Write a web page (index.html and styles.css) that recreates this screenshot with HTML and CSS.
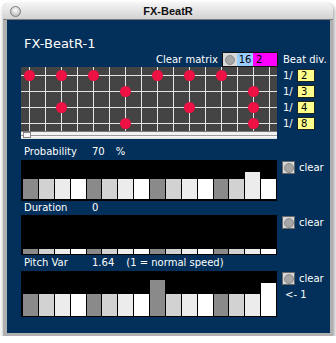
FILE: index.html
```html
<!DOCTYPE html>
<html>
	<head>
		<meta charset="UTF-8">
		<title>FX-BeatR</title>
		<link rel="stylesheet" href="styles.css">
	</head>
	<body>
		<section class="window">
			<div class="titlebar">
				<span class="close"></span>
				<span class="title">FX-BeatR</span>
				<span></span>
			</div>
			<div class="panel">
				<h1 class="name">FX-BeatR-1</h1>

				<div class="matrix-area">
					<div class="matrix-col">
						<div class="clear-row">
							<span>Clear matrix</span>
							<div class="seg">
								<span class="seg-knob"><i></i></span>
								<span class="seg-steps">16</span>
								<span class="seg-rows">2</span>
							</div>
						</div>
						<div class="grid">
							<span class="on"></span><span></span><span class="on"></span><span></span><span class="on"></span><span></span><span></span><span></span><span class="on"></span><span></span><span class="on"></span><span></span><span class="on"></span><span></span><span></span><span></span>
							<span></span><span></span><span></span><span></span><span></span><span></span><span class="on"></span><span></span><span></span><span></span><span></span><span></span><span></span><span></span><span class="on"></span><span></span>
							<span></span><span></span><span class="on"></span><span></span><span></span><span></span><span></span><span></span><span></span><span></span><span class="on"></span><span></span><span></span><span></span><span class="on"></span><span></span>
							<span></span><span></span><span></span><span></span><span></span><span></span><span class="on"></span><span></span><span></span><span></span><span></span><span></span><span></span><span></span><span class="on"></span><span></span>
						</div>
						<div class="slider"><span class="thumb"></span></div>
					</div>
					<div class="beat-col">
						<div class="beat-head">Beat div.</div>
						<div class="beat-row"><span class="frac">1/</span><span class="ybox">2</span></div>
						<div class="beat-row"><span class="frac">1/</span><span class="ybox">3</span></div>
						<div class="beat-row"><span class="frac">1/</span><span class="ybox">4</span></div>
						<div class="beat-row"><span class="frac">1/</span><span class="ybox">8</span></div>
					</div>
				</div>

				<div class="label-row prob-label">
					<span class="lbl">Probability</span><span>70</span><span class="unit">%</span>
				</div>
				<div class="graph-row">
					<div class="graph prob">
						<span class="bar"></span><span class="bar"></span><span class="bar"></span><span class="bar"></span>
						<span class="bar"></span><span class="bar"></span><span class="bar"></span><span class="bar"></span>
						<span class="bar"></span><span class="bar"></span><span class="bar"></span><span class="bar"></span>
						<span class="bar"></span><span class="bar"></span><span class="bar" style="height:27px"></span><span class="bar"></span>
					</div>
					<div class="side">
						<div class="clear"><span class="knob"><i></i></span>clear</div>
					</div>
				</div>

				<div class="label-row dur-label">
					<span class="lbl">Duration</span><span>0</span>
				</div>
				<div class="graph-row">
					<div class="graph dur">
						<span class="bar"></span><span class="bar"></span><span class="bar"></span><span class="bar"></span>
						<span class="bar"></span><span class="bar"></span><span class="bar"></span><span class="bar"></span>
						<span class="bar"></span><span class="bar"></span><span class="bar"></span><span class="bar"></span>
						<span class="bar"></span><span class="bar"></span><span class="bar"></span><span class="bar"></span>
					</div>
					<div class="side">
						<div class="clear"><span class="knob"><i></i></span>clear</div>
					</div>
				</div>

				<div class="label-row pitch-label">
					<span class="lbl">Pitch Var</span><span>1.64</span><span class="unit wide">(1 = normal speed)</span>
				</div>
				<div class="graph-row">
					<div class="graph pitch">
						<span class="bar"></span><span class="bar"></span><span class="bar"></span><span class="bar"></span>
						<span class="bar"></span><span class="bar"></span><span class="bar"></span><span class="bar"></span>
						<span class="bar" style="height:36px"></span><span class="bar"></span><span class="bar"></span><span class="bar"></span>
						<span class="bar"></span><span class="bar"></span><span class="bar"></span><span class="bar" style="height:33px"></span>
					</div>
					<div class="side">
						<div class="clear"><span class="knob"><i></i></span>clear</div>
						<div class="back">&lt;- 1</div>
					</div>
				</div>
			</div>
		</section>
	</body>
</html>
```

FILE: styles.css
```css
body{
	margin:0;
	background:#fff;
	font-family:"DejaVu Sans", sans-serif;
	font-size:10px;
}
.window{
	width:330px;
	margin:3px 0 0 3px;
	background:#b0b0b0;
	border-radius:5px 5px 0 0;
	box-shadow:1px 3px 5px rgba(0,0,0,.45);
	overflow:hidden;
}
.titlebar{
	height:16px;
	display:grid;
	grid-template-columns:1fr auto 1fr;
	align-items:center;
	background:linear-gradient(#f4f4f4,#d2d2d2);
	border-bottom:1px solid #7a7a7a;
}
.close{
	width:11px;
	height:11px;
	margin-left:7px;
	box-sizing:border-box;
	border-radius:50%;
	border:1px solid #7c7c7c;
	background:radial-gradient(circle at 50% 35%,#fdfdfd,#c4c4c4 70%);
}
.title{
	font:bold 11px "Liberation Sans", sans-serif;
	color:#111;
}
.panel{
	height:313px;
	margin:0 3px 3px 4px;
	padding-left:14px;
	box-sizing:border-box;
	background:#03305a;
	color:#fff;
	overflow:hidden;
}
.name{
	margin:16px 0 1px 3px;
	font-size:13px;
	font-weight:normal;
	line-height:15px;
}

/* matrix */
.matrix-area{
	display:flex;
	gap:5px;
}
.matrix-col{
	width:257px;
}
.clear-row{
	height:15px;
	display:flex;
	justify-content:flex-end;
	align-items:center;
	gap:4px;
}
.seg{
	display:flex;
	width:56px;
	height:15px;
	box-sizing:border-box;
	border:1px solid #111;
	color:#000;
	line-height:13px;
}
.seg-knob{
	width:14px;
	background:#d8d8d8;
	display:flex;
	align-items:center;
	justify-content:center;
}
.seg-knob i,.knob i{
	display:block;
	width:10px;
	height:10px;
	box-sizing:border-box;
	border-radius:50%;
	border:1px solid #8a8a8a;
	background:#a6a6a6;
}
.seg-steps{
	width:16px;
	background:#99ccff;
	text-align:center;
}
.seg-rows{
	flex:1;
	background:#ff00ff;
	padding-left:3px;
}
.grid{
	width:256px;
	height:64px;
	display:grid;
	grid-template-columns:repeat(16,16px);
	grid-auto-rows:16px;
	background-color:#444;
	background-image:
		linear-gradient(to right,transparent 8px,#e4e4e4 8px,#e4e4e4 9px,transparent 9px),
		linear-gradient(to bottom,transparent 8px,#e4e4e4 8px,#e4e4e4 9px,transparent 9px);
	background-size:16px 16px;
}
.grid .on::after{
	content:"";
	display:block;
	width:11px;
	height:11px;
	margin:3px 0 0 3px;
	border-radius:50%;
	background:#ee1144;
}
.slider{
	width:256px;
	height:8px;
	box-sizing:border-box;
	border-top:1px solid #777;
	background:linear-gradient(#f2f2f2 0,#f2f2f2 3px,#9a9a9a 3px,#9a9a9a 4px,#ffffff 4px,#dcdcdc 100%);
	padding:0 0 0 2px;
}
.thumb{
	display:block;
	width:8px;
	height:6px;
	box-sizing:border-box;
	border:1px solid #888;
	background:#f6f6f6;
}
.beat-head{
	height:15px;
	line-height:15px;
}
.beat-row{
	height:16px;
	display:flex;
	align-items:center;
}
.frac{
	width:14px;
}
.ybox{
	width:18px;
	height:13px;
	box-sizing:border-box;
	border:1px solid #222;
	background:#ffff8c;
	color:#000;
	line-height:11px;
	padding-left:3px;
}

/* sliders / graphs */
.label-row{
	display:flex;
	height:12px;
	line-height:12px;
	padding-left:3px;
}
.label-row .lbl{
	width:68px;
}
.label-row .unit{
	margin-left:11px;
}
.label-row .wide{
	margin-left:12px;
}
.prob-label{margin:7px 0 2px;}
.dur-label{margin:1px 0 1px;}
.pitch-label{margin:2px 0 2px;}

.graph-row{
	display:flex;
	gap:5px;
	align-items:flex-start;
}
.graph{
	width:256px;
	box-sizing:border-box;
	display:flex;
	align-items:flex-end;
	gap:1px;
	padding:0 1px 1px 2px;
	background:#000;
}
.graph .bar{
	flex:1;
}
.graph .bar:nth-child(4n+1){background:#8a8a8a;}
.graph .bar:nth-child(4n+2){background:#d2d2d2;}
.graph .bar:nth-child(4n+3){background:#ececec;}
.graph .bar:nth-child(4n+4){background:#fff;}
.prob{height:41px;padding-bottom:2px;}
.prob .bar{height:20px;}
.dur{height:40px;}
.dur .bar{height:5px;}
.pitch{height:46px;}
.pitch .bar{height:22px;}

.side{
	padding-top:1px;
}
.clear{
	display:flex;
	align-items:center;
	gap:4px;
	height:13px;
}
.knob{
	width:13px;
	height:13px;
	box-sizing:border-box;
	border:1px solid #666;
	background:#d8d8d8;
	display:flex;
	align-items:center;
	justify-content:center;
}
.back{
	margin:4px 0 0 3px;
	line-height:12px;
}
```
